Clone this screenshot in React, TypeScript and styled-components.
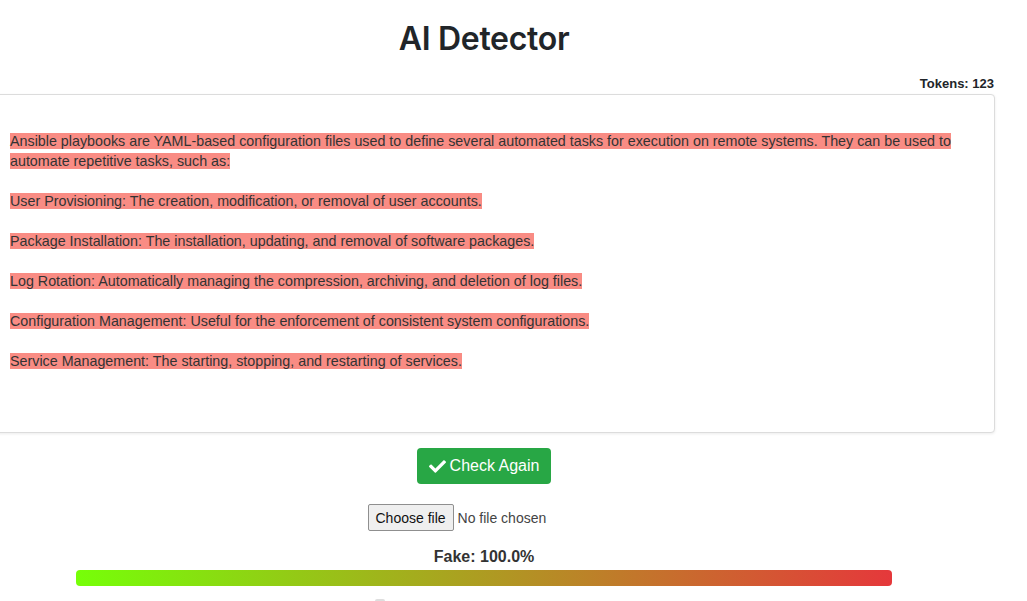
import React from "react";
import styled, { createGlobalStyle } from "styled-components";
import { FaCheck } from "react-icons/fa";

const GlobalStyle = createGlobalStyle`
  body {
    margin: 0;
    background: #fff;
    font-family: "Liberation Sans", Arial, sans-serif;
    color: #212529;
    overflow: hidden;
  }
`;

const Page = styled.div`
  width: 1022px;
  margin-left: -27px;
  display: flex;
  flex-direction: column;
  align-items: center;
`;

const Title = styled.h1`
  margin: 0;
  height: 76px;
  display: flex;
  align-items: center;
  font-family: Inter, "Noto Sans", sans-serif;
  font-size: 32px;
  font-weight: 600;
  letter-spacing: -0.3px;
  color: #212529;
`;

const TokenRow = styled.div`
  align-self: stretch;
  text-align: right;
  font-size: 13px;
  font-weight: bold;
  color: #212529;
  padding-right: 1px;
  line-height: 16px;
  height: 18px;
`;

const EditorBox = styled.div`
  align-self: stretch;
  box-sizing: border-box;
  height: 339px;
  padding: 36px 20px 0 36px;
  border: 1px solid #dcdcdc;
  border-radius: 4px;
  box-shadow: 0 1px 3px rgba(0, 0, 0, 0.08);
  background: #fff;
  font-size: 14.3px;
  line-height: 20px;
  color: #333;
`;

const Para = styled.p`
  margin: 0 0 20px;
`;

const Mark = styled.span`
  background: #f98c84;
`;

const CheckButton = styled.button`
  margin-top: 15px;
  height: 36px;
  padding: 0 12px;
  display: flex;
  align-items: center;
  gap: 4px;
  border: none;
  border-radius: 4px;
  background: #28a745;
  color: #fff;
  font-family: "Liberation Sans", Arial, sans-serif;
  font-size: 16px;
  cursor: pointer;

  svg {
    width: 17px;
    height: 17px;
  }
`;

const FileRow = styled.div`
  margin-top: 20px;
  width: 233px;
  display: flex;
  align-items: center;
  gap: 4px;
  font-size: 14px;
  color: #444;
`;

const FileButton = styled.span`
  box-sizing: border-box;
  height: 27px;
  padding: 0 7px;
  display: flex;
  align-items: center;
  border: 1px solid #8f8f8f;
  border-radius: 2px;
  background: #efefef;
  color: #111;
`;

const ScoreLabel = styled.div`
  margin-top: 17px;
  font-size: 16px;
  font-weight: bold;
  color: #333;
  line-height: 18px;
`;

const Bar = styled.div`
  margin-top: 4px;
  width: 816px;
  height: 16px;
  border-radius: 4px;
  background: linear-gradient(to right, #76ff08, #e5383b);
`;

const Thumb = styled.div`
  margin-top: 13px;
  margin-right: 209px;
  width: 10px;
  height: 6px;
  border-radius: 2px;
  background: #dedede;
`;

const paragraphs = [
  "Ansible playbooks are YAML-based configuration files used to define several automated tasks for execution on remote systems. They can be used to automate repetitive tasks, such as:",
  "User Provisioning: The creation, modification, or removal of user accounts.",
  "Package Installation: The installation, updating, and removal of software packages.",
  "Log Rotation: Automatically managing the compression, archiving, and deletion of log files.",
  "Configuration Management: Useful for the enforcement of consistent system configurations.",
  "Service Management: The starting, stopping, and restarting of services.",
];

const App: React.FC = () => {
  const score = 100.0;

  return (
    <>
      <GlobalStyle />
      <Page>
        <Title>AI Detector</Title>
        <TokenRow>Tokens: 123</TokenRow>
        <EditorBox>
          {paragraphs.map((text) => (
            <Para key={text}>
              <Mark>{text}</Mark>
            </Para>
          ))}
        </EditorBox>
        <CheckButton type="button">
          <FaCheck />
          Check Again
        </CheckButton>
        <FileRow>
          <FileButton>Choose file</FileButton>
          <span>No file chosen</span>
        </FileRow>
        <ScoreLabel>Fake: {score.toFixed(1)}%</ScoreLabel>
        <Bar />
        <Thumb />
      </Page>
    </>
  );
};

export default App;
